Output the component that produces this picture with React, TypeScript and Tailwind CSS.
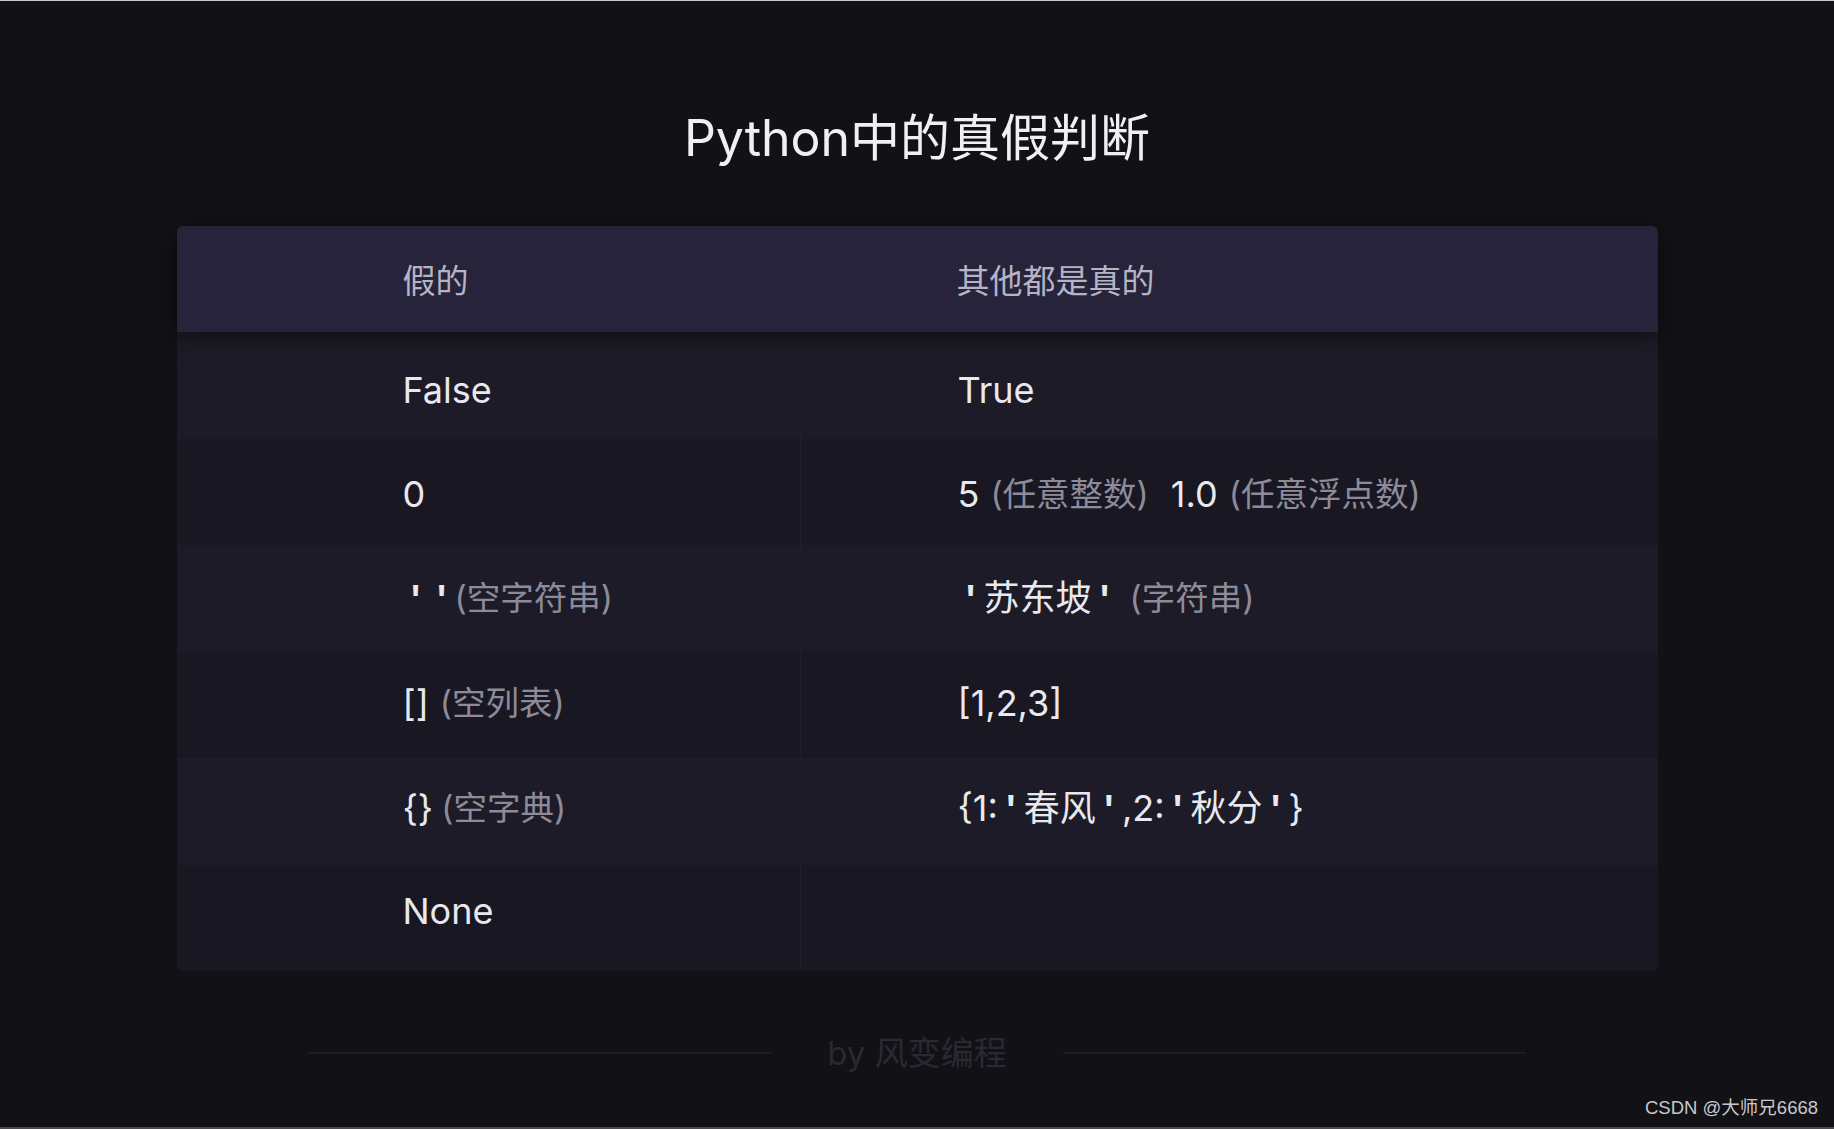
import React from "react";

const Q = () => <span className="inline-block w-[26px] text-center font-bold">'</span>;

const Ann = ({ children, cls = "" }: { children: React.ReactNode; cls?: string }) => (
  <span className={"text-[33.5px] text-[#8d8b99] " + cls}>{children}</span>
);

type Row = { left: React.ReactNode; right: React.ReactNode; shift: string };

const rows: Row[] = [
  { left: <>False</>, right: <>True</>, shift: "pt-[9px]" },
  {
    left: <>0</>,
    right: (
      <>
        5<Ann cls="ml-[11px] mr-[22px]">(任意整数)</Ann>1.0<Ann cls="ml-[11px]">(任意浮点数)</Ann>
      </>
    ),
    shift: "pt-[5px]",
  },
  {
    left: (
      <>
        <Q />
        <Q />
        <Ann>(空字符串)</Ann>
      </>
    ),
    right: (
      <>
        <Q />
        苏东坡
        <Q />
        <Ann cls="ml-[12px]">(字符串)</Ann>
      </>
    ),
    shift: "",
  },
  {
    left: (
      <>
        []<Ann cls="ml-[11px]">(空列表)</Ann>
      </>
    ),
    right: <>[1,2,3]</>,
    shift: "pb-[3px]",
  },
  {
    left: (
      <>
        {"{}"}
        <Ann cls="ml-[8px]">(空字典)</Ann>
      </>
    ),
    right: (
      <>
        {"{1:"}
        <Q />
        春风
        <Q />
        {",2:"}
        <Q />
        秋分
        <Q />
        {"}"}
      </>
    ),
    shift: "pb-[7px]",
  },
  { left: <>None</>, right: <></>, shift: "pb-[14px]" },
];

export default function App() {
  return (
    <div className="relative w-full h-[1129px] bg-[#111116] border-t border-[#c9c9c9] border-b-2 border-b-[#4a4a4e] flex flex-col items-center overflow-hidden font-['Inter','Noto_Sans_CJK_SC',sans-serif]">
      <h1 className="mt-[112px] h-[50px] text-[50px] leading-[50px] font-normal text-[#f0f0f2] whitespace-nowrap">
        Python中的真假判断
      </h1>

      <div className="mt-[63px] w-[1481px] rounded-[6px]">
        <div className="relative z-10 flex h-[106px] pt-[5px] items-center bg-[#26233a] rounded-t-[6px] shadow-[0_6px_22px_rgba(0,0,0,0.45)] text-[33px] text-[#b6b4c4]">
          <div className="w-[623px] pl-[226px]">假的</div>
          <div className="flex-1 pl-[157px]">其他都是真的</div>
        </div>
        {rows.map((r, i) => (
          <div
            key={i}
            className={
              "flex h-[106.5px] text-[36px] text-[#e9e8ee] whitespace-nowrap " +
              (i % 2 === 0 ? "bg-[#1c1b27] " : "bg-[#191822] ") +
              (i === rows.length - 1 ? "rounded-b-[6px]" : "")
            }
          >
            <div className={"w-[623px] pl-[226px] flex items-center " + r.shift}>{r.left}</div>
            <div className={"flex-1 pl-[157px] flex items-center border-l border-[#1f1e2b] " + r.shift}>{r.right}</div>
          </div>
        ))}
      </div>

      <div className="mt-[62px] h-[40px] flex items-center justify-center gap-[56px]">
        <div className="w-[463px] h-[2px] bg-[#1c1c23]" />
        <div className="text-[33px] leading-none text-[#2a2933] whitespace-nowrap">by 风变编程</div>
        <div className="w-[463px] h-[2px] bg-[#1c1c23]" />
      </div>

      <div className="absolute right-[16px] bottom-[10px] text-[18.5px] leading-none text-[#c8c8cc] font-['Liberation_Sans','Noto_Sans_CJK_SC',sans-serif] whitespace-nowrap">
        CSDN @大师兄6668
      </div>
    </div>
  );
}
